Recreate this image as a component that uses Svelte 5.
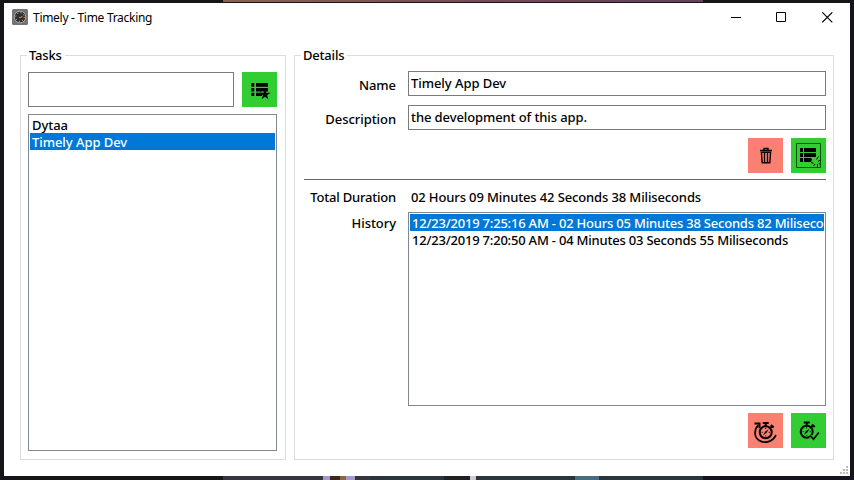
<script>
  let tasks = ['Dytaa', 'Timely App Dev'];
  let history = [
    '12/23/2019 7:25:16 AM - 02 Hours 05 Minutes 38 Seconds 82 Miliseconds',
    '12/23/2019 7:20:50 AM - 04 Minutes 03 Seconds 55 Miliseconds'
  ];
</script>

{#snippet stopwatch()}
  <circle cx="17" cy="19.5" r="6" fill="none" stroke="#000" stroke-width="2" />
  <path d="M14 10.3h6M17 10.5v3M22.2 12.2l2.8 2.6M21.2 15.4l2.2-2" fill="none" stroke="#000" stroke-width="2" />
  <path d="M14.3 22.5l2-3.6 3.6-2.4-2.2 3.6z" />
  <path d="M17 15v1.2M12.8 19.5h1.2M20 19.5h1.2M17 22.6v1.2" stroke="#000" stroke-width=".9" />
{/snippet}

<div class="desktop">
  <div class="strip top"><i></i></div>
  <main class="window">
    <header>
      <svg class="logo" width="16" height="16" viewBox="0 0 16 16">
        <rect width="16" height="16" rx="1.5" fill="#737373" />
        <circle cx="8" cy="8" r="5.8" fill="#303030" stroke="#a5a5a5" />
        <circle cx="8" cy="8" r="4.3" fill="none" stroke="#ccc" stroke-width="1" stroke-dasharray="1 2.4" />
        <path d="M7 8.5h1.5l2-1" fill="none" stroke="#ee8034" stroke-width="1.1" />
      </svg>
      <h1>Timely - Time Tracking</h1>
      <div class="controls">
        <svg width="11" height="11" viewBox="0 0 11 11"><path d="M0 5.5h10" stroke="#000" /></svg>
        <svg width="11" height="11" viewBox="0 0 11 11"><path d="M.5.5h9v9h-9z" fill="none" stroke="#000" /></svg>
        <svg width="11" height="11" viewBox="0 0 11 11"><path d="M.3.3l10 10M10.3.3l-10 10" stroke="#000" stroke-width="1.1" /></svg>
      </div>
    </header>
    <div class="groups">
      <section class="tasks">
        <h2>Tasks</h2>
        <div class="add">
          <div class="field"></div>
          <div class="button green">
            <svg width="35" height="35" viewBox="0 0 35 35">
              <path d="M9.3 11h3v3.8h-3zM9.3 16h3v3.4h-3zM9.3 20.8h3V24h-3zM14 11h12v3.8H14zM14 16h12v3.4H14zM14 20.8h6V24h-6z" />
              <path d="M23 17l1.3 3.7 4.2.1-3.4 2.4 1.3 4-3.4-2.4-3.4 2.4 1.3-4-3.4-2.4 4.2-.1z" />
            </svg>
          </div>
        </div>
        <div class="list">
          {#each tasks as task, i}
            <div class="row" class:selected={i === 1}>{task}</div>
          {/each}
        </div>
      </section>
      <section class="details">
        <h2>Details</h2>
        <div class="line name"><span class="label">Name</span><div class="field">Timely App Dev</div></div>
        <div class="line description"><span class="label">Description</span><div class="field">the development of this app.</div></div>
        <div class="actions">
          <div class="button red">
            <svg width="35" height="35" viewBox="0 0 35 35">
              <path d="M12 12.5h12M16 12v-1.5h4V12" fill="none" stroke="#000" stroke-width="1.4" />
              <path d="M13.4 14.2h9.2l-.8 10.6h-7.6z" fill="none" stroke="#000" stroke-width="1.4" />
              <path d="M16.5 15v9M19.5 15v9" stroke="#000" stroke-width="1.3" />
            </svg>
          </div>
          <div class="button green">
            <svg width="35" height="35" viewBox="0 0 35 35">
              <path d="M5.5 5.5h24v24h-24z" fill="none" stroke="#10500f" />
              <path d="M9 10h3v4H9zM9 15h3v4H9zM9 20h3v4H9zM13 10h12v4H13zM13 15h12v4H13zM13 20h7l1 1.5-1 2.5h-7z" />
              <path d="M25.5 21.5l2-3M27 23.5l2.2-1.5M22.5 25.2l-2.5-.7M24 26l-1.5 2M26.5 26v2.7M28 25l1.5 2" stroke="#000" />
            </svg>
          </div>
        </div>
        <div class="divider"></div>
        <div class="line total"><span class="label">Total Duration</span><span class="value">02 Hours 09 Minutes 42 Seconds 38 Miliseconds</span></div>
        <div class="line history">
          <span class="label">History</span>
          <div class="list">
            {#each history as entry, i}
              <div class="row" class:selected={i === 0}>{entry}</div>
            {/each}
          </div>
        </div>
        <div class="actions bottom">
          <div class="button red">
            <svg width="35" height="35" viewBox="0 0 35 35">
              <g transform="translate(.7 -.2)">{@render stopwatch()}</g>
              <path d="M10.3 12.2C5.7 17 6 24.3 11.3 27.4c5.7 3.4 13.2 1.6 16.7-5.4" fill="none" stroke="#000" stroke-width="1.7" />
              <path d="M6.5 10.5h5v4.7" fill="none" stroke="#000" stroke-width="2" />
            </svg>
          </div>
          <div class="button green">
            <svg width="35" height="35" viewBox="0 0 35 35">
              <g transform="translate(-1.3 -.8)">{@render stopwatch()}</g>
              <path d="M19.5 23l3 3.2 5.3-6.7" fill="none" stroke="#32cd32" stroke-width="3.5" />
              <path d="M19.5 23l3 3.2 5.3-6.7" fill="none" stroke="#000" stroke-width="1.7" />
            </svg>
          </div>
        </div>
      </section>
    </div>
    <svg class="grip" width="8" height="8" viewBox="0 0 8 8"><path d="M6 0h2v2H6zM3 3h2v2H3zM6 3h2v2H6zM0 6h2v2H0zM3 6h2v2H3zM6 6h2v2H6z" fill="#bcbcbc" /></svg>
  </main>
  <div class="strip foot"></div>
</div>

<style>
  .desktop {
    width: 854px; height: 480px; box-sizing: border-box; overflow: hidden;
    display: flex; flex-direction: column; background: #15151a;
    font: 500 13px/17px "Noto Sans", "Open Sans", sans-serif; letter-spacing: -.06px; color: #000;
  }
  .strip { flex: none; }
  .top { height: 3px; }
  .top i { display: block; width: 480px; height: 2px; margin-left: 223px; background: linear-gradient(90deg, #8a6253, #704858 65%, #64435b); }
  .foot {
    height: 4px;
    background: linear-gradient(90deg, #15151a 223px, #35363c 223px 323px, #a698cb 323px 330px, #3a2820 330px 340px, #886744 340px 346px, #a698cb 346px 355px, #35363c 355px 370px, #2b353d 370px 444px, #221f25 444px 470px, #ccc 470px 476px, #2b353d 476px 575px, #4b6c7c 575px 599px, #2b353d 599px 703px, #15151f 703px);
  }
  .window {
    position: relative; flex: 1; width: 846px; margin-left: 4px; box-sizing: border-box;
    background: #fff; display: flex; flex-direction: column;
  }
  header { height: 52px; flex: none; display: flex; align-items: flex-start; }
  .logo { margin: 6px 5px 0 8px; }
  h1 { margin: 6px 0 0; font: 400 12px/17px "Noto Sans", "Open Sans", sans-serif; letter-spacing: -.29px; }
  .controls { margin: 9px 17px 0 auto; display: flex; gap: 35px; }
  .controls svg, .button svg { display: block; }
  .controls svg:first-child { margin-right: -1px; }
  .groups { display: flex; gap: 8px; margin-left: 16px; height: 405px; }
  section { box-sizing: border-box; border: 1px solid #dcdcdc; display: flex; flex-direction: column; height: 405px; }
  .tasks { width: 266px; padding: 0 8px 8px 7px; }
  .details { width: 540px; padding: 0 7px 0 9px; }
  h2 { font: inherit; letter-spacing: -.2px; line-height: 17px; height: 17px; margin: -9px 0 0; padding: 0 3px 0 2px; background: #fff; align-self: flex-start; }
  .tasks h2 { margin-left: -1px; }
  .details h2 { margin-left: -3px; }
  .add { display: flex; justify-content: space-between; margin-top: 8px; }
  .field { box-sizing: border-box; border: 1px solid #7a7a7a; white-space: nowrap; }
  .add .field { width: 206px; height: 35px; }
  .button { width: 35px; height: 35px; }
  .green { background: #32cd32; }
  .red { background: #fa8072; }
  .list { box-sizing: border-box; border: 1px solid #828790; padding: 1px; overflow: hidden; }
  .tasks .list { margin-top: 7px; flex: 1; }
  .row { box-sizing: border-box; height: 17px; padding: 1px 0 0 2px; line-height: 17px; white-space: nowrap; overflow: hidden; }
  .selected { background: #0078d7; color: #fff; }
  .line { display: flex; }
  .label { width: 92px; margin-right: 12px; text-align: right; flex: none; }
  .total .label { letter-spacing: -.2px; }
  .line .field { width: 418px; height: 25px; padding: 3px 2px; }
  .name { margin-top: 7px; }
  .description { margin-top: 9px; }
  .description .field { letter-spacing: -.1px; }
  .name .label, .description .label { padding-top: 6px; }
  .actions { display: flex; justify-content: flex-end; gap: 8px; margin-top: 8px; }
  .divider { height: 1px; background: #646464; margin-top: 6px; flex: none; }
  .total { margin-top: 9px; height: 17px; }
  .value { padding-left: 3px; letter-spacing: -.13px; }
  .history { margin-top: 6px; }
  .history .label { padding-top: 3px; }
  .history .list { width: 418px; height: 194px; letter-spacing: -.207px; }
  .bottom { margin-top: 7px; }
  .grip { position: absolute; right: 2px; bottom: 2px; }
</style>
